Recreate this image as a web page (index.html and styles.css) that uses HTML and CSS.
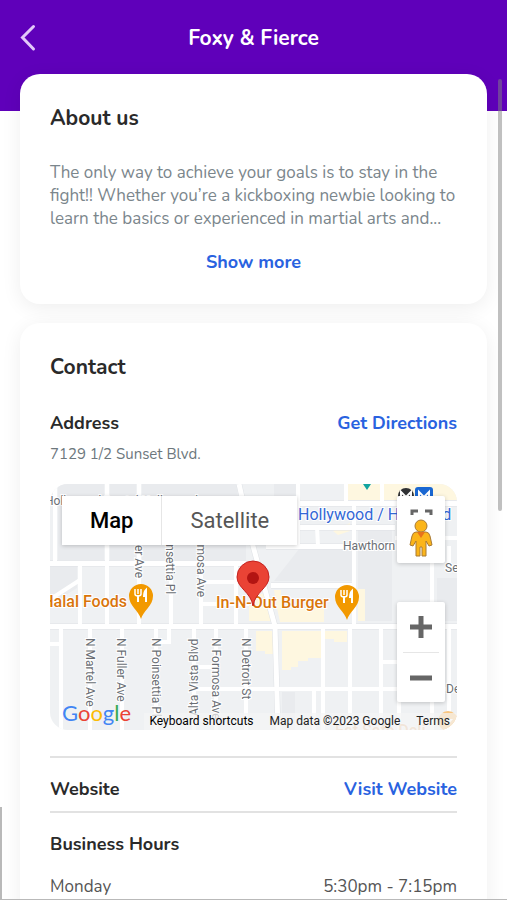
FILE: index.html
```html
<!DOCTYPE html>
<html lang="en">
<head>
    <meta charset="UTF-8">
    <meta name="viewport" content="width=device-width, initial-scale=1.0">
    <title>Foxy &amp; Fierce</title>
    <link rel="stylesheet" href="styles.css">
</head>
<body>
    <header class="header">
        <button class="back" type="button" aria-label="Back">
            <svg width="16" height="28" viewBox="0 0 16 28"><path d="M13.500 2.500 2.500 13.500l11 11.500"/></svg>
        </button>
        <h1>Foxy &amp; Fierce</h1>
    </header>

    <main class="content">
        <section class="card about">
            <h2>About us</h2>
            <p class="about-text">The only way to achieve your goals is to stay in the fight!! Whether you’re a kickboxing newbie looking to learn the basics or experienced in martial arts and...</p>
            <button class="link show-more" type="button">Show more</button>
        </section>

        <section class="card contact">
            <h2>Contact</h2>
            <div class="row">
                <h3>Address</h3>
                <a class="link" href="#directions">Get Directions</a>
            </div>
            <p class="street">7129 1/2 Sunset Blvd.</p>

            <div class="map">
                <svg class="map-canvas" viewBox="0 0 409 246" preserveAspectRatio="xMidYMid slice">
                    <rect width="409" height="246" fill="#eff1f3"/>
                    <!-- blocks -->
                    <g fill="#e9ebee">
                        <path d="M9 0h46v76H9zM0 82h28v22L0 122zM61 0h26v76H61zM93 0h94l10 60v16H93zM250 65h53v32H225zM309 46h34v91h-34zM225 0h22v16h-22z"/>
                        <path d="M233 208h13v38h-13zM388 94h21v43h-21z"/>
                    </g>
                    <g fill="#fef7e0">
                        <path d="M298 0h111v16H298zM233 147h40v27h-14v3h-10v6h-7v3h-9zM207 147h18v23h-9v-3h-9zM276 147h22v11h-13v-3h-9zM228 124h47v14h-44zM225 106h7v18h-4zM309 105h7v32h-7zM200 110h17l5 27h-22zM284 47l17-8v8l-12 4z"/>
                    </g>
                    <!-- streets -->
                    <g fill="none" stroke="#dfe2e6" stroke-width="6">
                        <path d="M0 142.500h409M0 79.500h197M249 19.500h160M217 62.500h129M250 43.500h96M222 101.500h83"/>
                        <path d="M190 0l14 62 22 80 3 104"/>
                    </g>
                    <g fill="none" stroke="#fff" stroke-width="4">
                        <path d="M6 0v79M31 79v63M58 0v142M90 0v142M122 79v63M152 62v80M187 79v63M154 98h33M154 120h46"/>
                        <path d="M249 0v62M268 43l1 19M297 0v19M305 19v123M383 62v80M333 0v19M346 54h63M400 62v20M255 43h10"/>
                        <path d="M12 142v104M41 142v104M73 142v104M107 142v104M120 142v16h-12M145 142v104M167 142v104M197 142v104"/>
                        <path d="M274 142v104M301 142v104M332 142v104M383 142v104M400 142v104M265 205v41M350 205v41"/>
                        <path d="M0 160h12M145 205h264M145 183h22M332 178h51"/>
                        <path d="M0 116l31-20"/>
                    </g>
                    <g fill="none" stroke="#fff" stroke-width="5">
                        <path d="M0 142.500h409M0 79.500h197M249 19.500h160M217 62.500h129M250 43.500h96M222 101.500h83"/>
                        <path d="M190 0l14 62 22 80 3 104"/>
                    </g>
                    <!-- street names -->
                    <g class="street-name">
                        <text x="-4" y="21">Hollywood Dental Hollywood</text>
                        <text x="294" y="66">Hawthorn Ave</text>
                        <text x="396" y="88">Selma</text>
                        <text x="397" y="209">De Longpre</text>
                        <text transform="translate(86 42) rotate(90)">Fuller Ave</text>
                        <text transform="translate(117 43) rotate(90)">Poinsettia Pl</text>
                        <text transform="translate(148 43) rotate(90)">Formosa Ave</text>
                        <text transform="translate(37 154) rotate(90)">N Martel Ave</text>
                        <text transform="translate(68 154) rotate(90)">N Fuller Ave</text>
                        <text transform="translate(103 154) rotate(90)">N Poinsettia Pl</text>
                        <text transform="translate(149 232) rotate(-90)">Alta Vista Blvd</text>
                        <text transform="translate(163 154) rotate(90)">N Formosa Ave</text>
                        <text transform="translate(193 154) rotate(90)">N Detroit St</text>
                    </g>
                    <!-- places -->
                    <text class="station" x="249" y="36">Hollywood / Highland</text>
                    <path d="M314 0h8l-4 6z" fill="#12a4a0"/>
                    <circle cx="357" cy="12" r="8" fill="#303134"/>
                    <path d="M352 16V8l5 5 5-5v8" fill="none" stroke="#fff" stroke-width="2"/>
                    <rect x="366" y="3" width="18" height="18" rx="3" fill="#1967d2"/>
                    <path d="M370 16V8l5 5 5-5v8" fill="none" stroke="#fff" stroke-width="2"/>
                    <text class="place" x="78" y="123" text-anchor="end">Halal Foods</text>
                    <text class="place" x="167" y="124">In-N-Out Burger</text>
                    <text class="place faded" x="286" y="252">Eat Safe Deli</text>
                    <circle cx="399" cy="237" r="10" fill="#f9c680"/>
                    <path d="M394 235h10l-5 6z" fill="#fff"/>
                    <g id="food">
                        <path d="M92 135c-2-8-12-13-12-23a12 12 0 0 1 24 0c0 10-10 15-12 23z" fill="#f29900"/>
                        <g fill="none" stroke="#fff">
                            <path d="M86 105v5q0 2 3 2t3-2v-5M89 105v5" stroke-width="1.500"/>
                            <path d="M89 111v7M97 118v-12q-2 2-2 7" stroke-width="2"/>
                        </g>
                    </g>
                    <use href="#food" x="206" y="1"/>
                    <path d="M204 122c-2-14-16-18-16-29a16 16 0 0 1 32 0c0 11-14 15-16 29z" fill="#ea4335" stroke="#c5221f"/>
                    <circle cx="204" cy="94" r="6" fill="#b31412"/>
                </svg>

                <div class="map-type">
                    <button class="active" type="button">Map</button>
                    <button type="button">Satellite</button>
                </div>
                <button class="map-box street-view" type="button" aria-label="Street View">
                    <svg width="48" height="67" viewBox="0 0 48 67">
                        <path d="M15 19v-4h6M28 15h6v4" fill="none" stroke="#666" stroke-width="3"/>
                        <g fill="#fbb51a" stroke="#a87a35">
                            <path d="M19 36q-3 0-4 4l-2 9 3 1 3-5v15h4v-9h2v9h4V45l3 5 3-1-2-9q-1-4-4-4z"/>
                            <circle cx="24" cy="30" r="6"/>
                        </g>
                        <path d="M20 36h8l-4 6z" fill="#e8731a"/>
                    </svg>
                </button>
                <div class="map-box zoom">
                    <button type="button" aria-label="Zoom in"><svg width="22" height="22" viewBox="0 0 22 22"><path d="M0 11h22M11 0v22"/></svg></button>
                    <button type="button" aria-label="Zoom out"><svg width="22" height="22" viewBox="0 0 22 22"><path d="M0 11h22"/></svg></button>
                </div>
                <div class="google" aria-label="Google"><span class="blue">G</span><span class="red">o</span><span class="yellow">o</span><span class="blue">g</span><span class="green">l</span><span class="red">e</span></div>
                <div class="map-footer">
                    <button type="button">Keyboard shortcuts</button>
                    <span>Map data ©2023 Google</span>
                    <a href="#terms">Terms</a>
                </div>
            </div>

            <div class="row website">
                <h3>Website</h3>
                <a class="link" href="#website">Visit Website</a>
            </div>

            <h3 class="hours-title">Business Hours</h3>
            <table class="hours">
                <tr>
                    <th scope="row">Monday</th>
                    <td>5:30pm - 7:15pm</td>
                </tr>
            </table>
        </section>
    </main>
    <div class="scroll-thumb"></div>
    <div class="frame-edge"></div>
</body>
</html>
```
FILE: styles.css
```css
* {
    box-sizing: border-box;
}
body {
    margin: 0;
    height: 100vh;
    overflow: hidden;
    background: #fff;
    font-family: Nunito, Lato, sans-serif;
    font-size: 18px;
    line-height: 24px;
    color: #2a2a2a;
}
h1, h2, h3, p {
    margin: 0;
}
button {
    padding: 0;
    border: none;
    background: none;
    font: inherit;
    cursor: pointer;
}
.header {
    display: grid;
    grid-template-columns: 40px 1fr 40px;
    align-items: start;
    height: 111px;
    padding: 24px 20px 0;
    background: #5f00ba;
    color: #fff;
}
.header h1 {
    font-size: 21px;
    line-height: 28px;
    text-align: center;
}
.back {
    height: 28px;
    text-align: left;
}
.back svg {
    display: block;
    fill: none;
    stroke: #e3c8fa;
    stroke-width: 3;
    stroke-linecap: round;
}
.content {
    display: flex;
    flex-direction: column;
    gap: 19px;
    margin-top: -37px;
    padding: 0 20px;
}
.card {
    padding: 30px;
    border-radius: 20px;
    background: #fff;
    box-shadow: 0 4px 20px rgba(0, 0, 0, 0.07);
}
.card h2 {
    font-size: 21px;
    line-height: 28px;
}
.card h3 {
    font-size: 18px;
    line-height: 24px;
}
.about {
    display: flex;
    flex-direction: column;
}
.about-text {
    margin-top: 29px;
    font-size: 17px;
    line-height: 23px;
    color: #7b868c;
}
.link {
    color: #2962e0;
    font-weight: bold;
    text-decoration: none;
}
.show-more {
    align-self: center;
    margin-top: 20px;
}
.row {
    display: flex;
    justify-content: space-between;
    margin-top: 30px;
}
.street {
    margin-top: 8px;
    font-size: 15px;
    line-height: 22px;
    color: #6d777d;
}
.map {
    position: relative;
    height: 246px;
    margin-top: 19px;
    border-radius: 18px;
    overflow: hidden;
    font-family: Roboto, sans-serif;
}
.map-canvas {
    display: block;
    width: 100%;
    height: 100%;
}
.street-name {
    font-size: 12px;
    fill: #6b6f75;
    stroke: #fff;
    stroke-width: 2px;
    paint-order: stroke;
}
.station, .place {
    font-size: 16px;
    fill: #3367d6;
    stroke: #fff;
    stroke-width: 2px;
    paint-order: stroke;
}
.place {
    font-weight: 500;
    fill: #d9750b;
}
.faded {
    opacity: 0.4;
}
.map-type {
    position: absolute;
    top: 12px;
    left: 12px;
    display: flex;
    height: 49px;
    background: #fff;
    box-shadow: 0 1px 4px rgba(0, 0, 0, 0.2);
    font-size: 22px;
}
.map-type button {
    padding: 0 28px;
    color: #565656;
}
.map-type .active {
    border-right: 1px solid #e6e6e6;
    font-weight: 500;
    color: #000;
}
.map-box {
    position: absolute;
    right: 12px;
    width: 48px;
    background: #fff;
    border-radius: 2px;
    box-shadow: 0 1px 4px rgba(0, 0, 0, 0.2);
}
.street-view {
    top: 12px;
    height: 67px;
}
.street-view svg {
    display: block;
}
.zoom {
    bottom: 28px;
    padding: 0 6px;
}
.zoom button {
    display: grid;
    place-items: center;
    width: 100%;
    height: 50px;
}
.zoom button + button {
    border-top: 1px solid #e6e6e6;
}
.zoom svg {
    stroke: #666;
    stroke-width: 5;
}
.google {
    position: absolute;
    left: 12px;
    bottom: 3px;
    font-family: Lato, sans-serif;
    font-size: 22px;
    line-height: 28px;
}
.blue {
    color: #4285f4;
}
.red {
    color: #ea4335;
}
.yellow {
    color: #fbbc05;
}
.green {
    color: #34a853;
}
.map-footer {
    position: absolute;
    right: 0;
    bottom: 0;
    display: flex;
    gap: 16px;
    padding: 0 7px 0 5px;
    background: rgba(245, 245, 245, 0.7);
    font-size: 12px;
    line-height: 17px;
    color: #222;
}
.map-footer a {
    color: #222;
    text-decoration: none;
}
.website {
    margin-top: 26px;
    padding: 19px 0 10px;
    border-top: 2px solid #e2e2e2;
    border-bottom: 2px solid #e2e2e2;
}
.hours-title {
    margin-top: 19px;
}
.hours {
    width: 100%;
    margin-top: 19px;
    border-collapse: collapse;
    font-size: 17px;
    color: #555;
}
.hours th, .hours td {
    padding: 0;
    font-weight: normal;
    text-align: left;
}
.hours td {
    text-align: right;
}
.scroll-thumb {
    position: fixed;
    top: 79px;
    right: 5px;
    width: 4px;
    height: 48vh;
    border-radius: 2px;
    background: rgba(130, 130, 130, 0.5);
}
.frame-edge {
    position: fixed;
    right: 0;
    bottom: 0;
    left: 0;
    height: 93px;
    border-left: 2px solid #b9b9b9;
    border-bottom: 1px solid #b9b9b9;
    pointer-events: none;
}
```
